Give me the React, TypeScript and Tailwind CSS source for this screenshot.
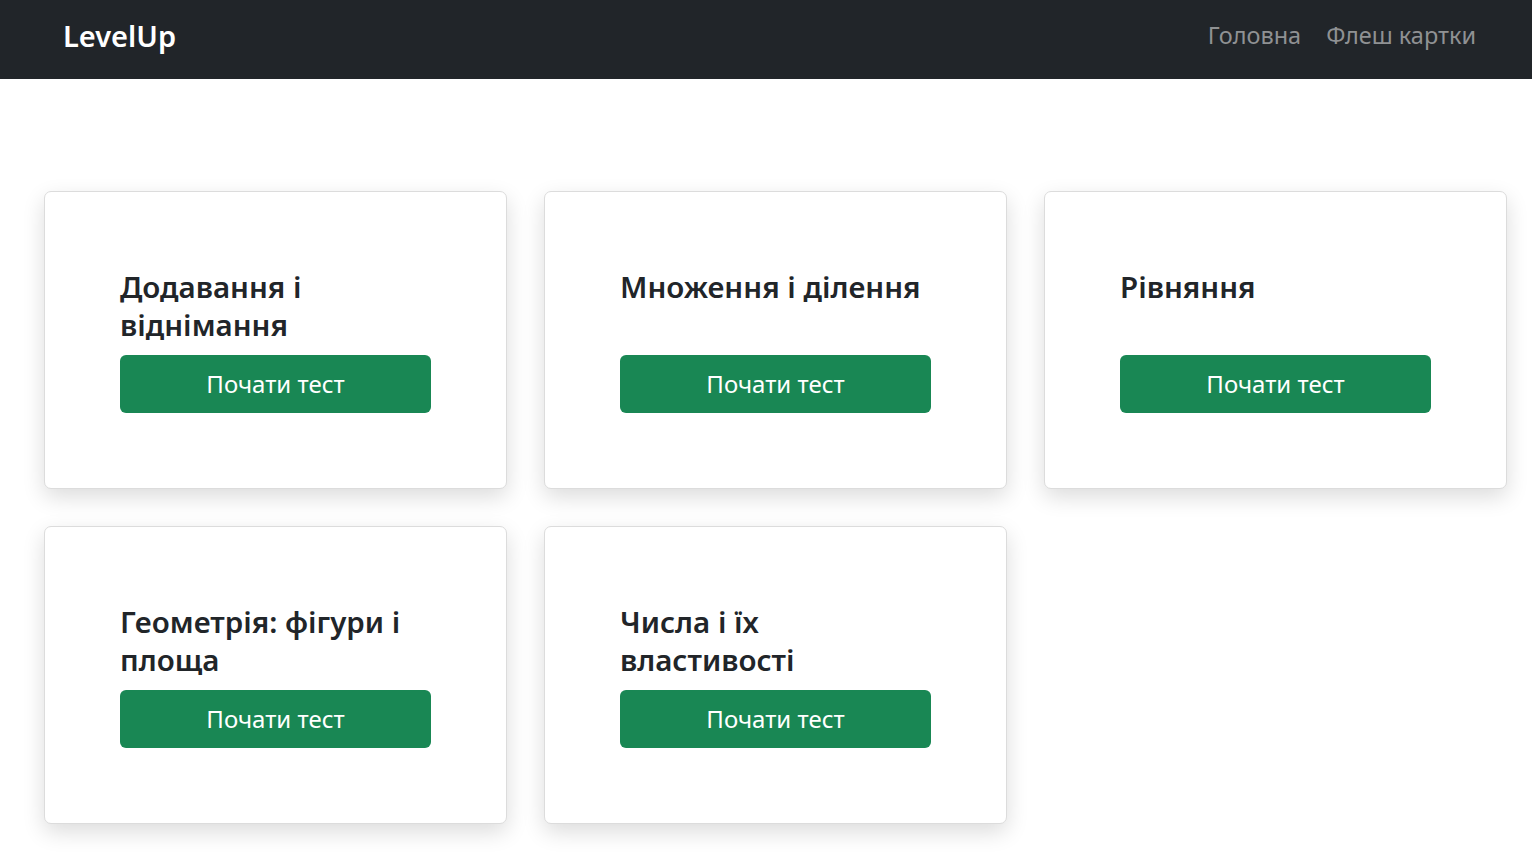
const tests = [
  "Додавання і віднімання",
  "Множення і ділення",
  "Рівняння",
  "Геометрія: фігури і площа",
  "Числа і їх властивості",
];

export default function App() {
  return (
    <div className="min-h-screen bg-white font-['Noto_Sans',sans-serif] text-[#212529]">
      <nav className="flex h-[79px] items-center justify-between bg-[#212529] pb-[8px] pl-[63px] pr-[56px]">
        <a href="#" className="text-[29px] font-semibold text-white">
          LevelUp
        </a>
        <div className="flex gap-[25px] text-[23.5px] text-[#8f9193]">
          <a href="#">Головна</a>
          <a href="#">Флеш картки</a>
        </div>
      </nav>

      <main className="grid grid-cols-[repeat(3,463px)] gap-x-[37px] gap-y-[37px] pl-[44px] pt-[112px]">
        {tests.map((title) => (
          <div
            key={title}
            className="h-[298px] rounded-[7px] border border-[#dcdcdc] bg-white px-[75px] pt-[76px] shadow-[0_8px_22px_rgba(0,0,0,0.14)]"
          >
            <h3 className="mb-[10px] h-[77px] w-[311px] text-[29.5px] font-semibold leading-[38px]">
              {title}
            </h3>
            <button className="h-[58px] w-[311px] rounded-[6px] bg-[#198754] text-[24px] text-white">
              Почати тест
            </button>
          </div>
        ))}
      </main>
    </div>
  );
}
